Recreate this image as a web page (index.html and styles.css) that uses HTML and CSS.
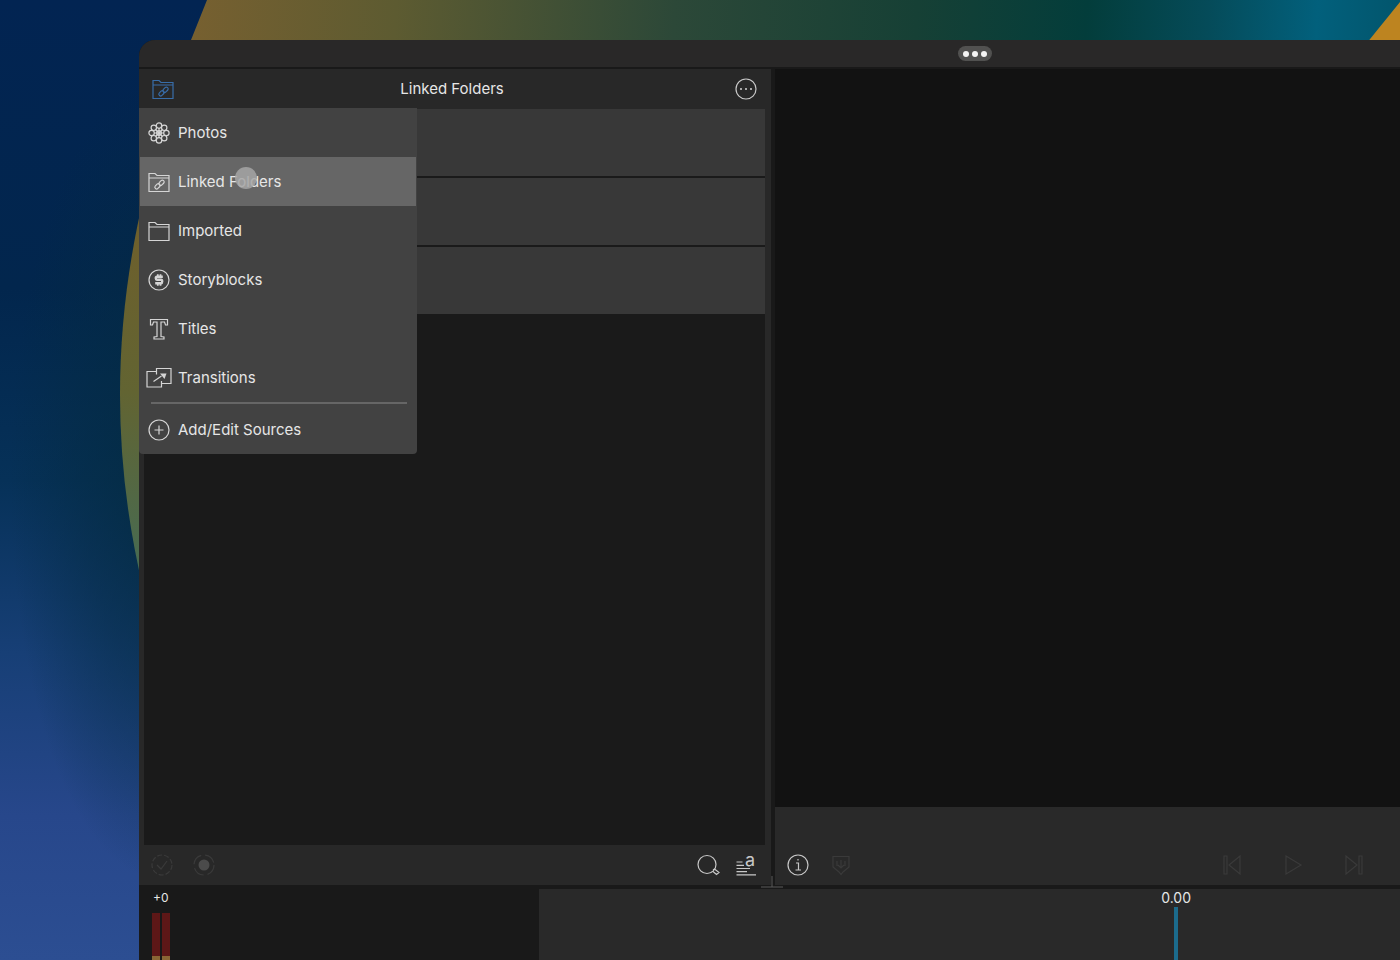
FILE: index.html
```html
<!DOCTYPE html>
<html lang="en">
<head>
<meta charset="utf-8">
<meta name="viewport" content="width=device-width, initial-scale=1">
<title>Linked Folders</title>
<link rel="stylesheet" href="styles.css">
</head>
<body>
<svg class="wallpaper" viewBox="0 0 1400 960" preserveAspectRatio="xMinYMin slice" aria-hidden="true">
  <defs>
    <linearGradient id="sea" x1="0" y1="0" x2="0" y2="960" gradientUnits="userSpaceOnUse">
      <stop offset="0" stop-color="#022452"/><stop offset=".3" stop-color="#02264d"/><stop offset=".5" stop-color="#063158"/><stop offset=".68" stop-color="#173f76"/><stop offset=".85" stop-color="#27478b"/><stop offset="1" stop-color="#2c4e92"/>
    </linearGradient>
    <radialGradient id="shade" cx="0" cy="0" r="1" gradientUnits="userSpaceOnUse" gradientTransform="translate(160 480) scale(150 400)">
      <stop offset="0" stop-color="#042b42" stop-opacity=".9"/><stop offset=".5" stop-color="#042b42" stop-opacity=".5"/><stop offset="1" stop-color="#042b42" stop-opacity="0"/>
    </radialGradient>
    <linearGradient id="arch" x1="190" y1="0" x2="1400" y2="60" gradientUnits="userSpaceOnUse">
      <stop offset="0" stop-color="#776030"/><stop offset=".17" stop-color="#5d5b31"/><stop offset=".4" stop-color="#2c4838"/><stop offset=".6" stop-color="#164035"/><stop offset=".74" stop-color="#033d3b"/><stop offset=".84" stop-color="#054b59"/><stop offset=".93" stop-color="#02607c"/><stop offset="1" stop-color="#02556c"/>
    </linearGradient>
    <linearGradient id="rim" x1="0" y1="210" x2="0" y2="575" gradientUnits="userSpaceOnUse">
      <stop offset="0" stop-color="#6f5f2c"/><stop offset=".5" stop-color="#626432"/><stop offset="1" stop-color="#466b53"/>
    </linearGradient>
  </defs>
  <rect width="1400" height="960" fill="url(#sea)"/>
  <rect width="320" height="960" fill="url(#shade)"/>
  <path d="M207 0H1400V60H183Z" fill="url(#arch)"/>
  <path d="M1400 2L1366 44H1400Z" fill="#bd8420"/>
  <path d="M144 196C112 330 112 460 144 592Z" fill="url(#rim)"/>
</svg>

<svg class="symbols" aria-hidden="true">
  <symbol id="folder" viewBox="0 0 26 26"><path d="M3 22.500V4.500H9L11 6.500H23V22.500ZM3 9H23"/></symbol>
  <symbol id="linked" viewBox="0 0 26 26"><path d="M3 22.500V4.500H9L11 6.500H23V22.500ZM3 9H23"/><rect x="12.500" y="12" width="6" height="3.600" rx="1.800" transform="rotate(-45 15.500 13.800)"/><rect x="8.500" y="15.500" width="6" height="3.600" rx="1.800" transform="rotate(-45 11.500 17.300)"/></symbol>
</svg>

<main class="window">
  <header class="titlebar">
    <button class="grabber" aria-label="Window options"><i></i><i></i><i></i></button>
  </header>

  <div class="workspace">
    <section class="library">
      <header class="library-head">
        <button class="icon-button source" aria-label="Media source"><svg class="icon"><use href="#linked"/></svg></button>
        <h1>Linked Folders</h1>
        <button class="icon-button" aria-label="More"><svg class="icon" viewBox="0 0 26 26"><circle cx="13" cy="13" r="10"/><g class="solid"><circle cx="8" cy="13" r="1.100"/><circle cx="13" cy="13" r="1.100"/><circle cx="18" cy="13" r="1.100"/></g></svg></button>
      </header>

      <div class="folder-list">
        <div class="folder-row"></div>
        <div class="folder-row"></div>
        <div class="folder-row"></div>
      </div>

      <nav class="menu" aria-label="Sources">
        <button class="menu-item"><svg class="icon" viewBox="0 0 26 26"><g><circle cx="13" cy="5.600" r="2.700"/><circle cx="18.200" cy="7.800" r="2.700"/><circle cx="20.400" cy="13" r="2.700"/><circle cx="18.200" cy="18.200" r="2.700"/><circle cx="13" cy="20.400" r="2.700"/><circle cx="7.800" cy="18.200" r="2.700"/><circle cx="5.600" cy="13" r="2.700"/><circle cx="7.800" cy="7.800" r="2.700"/><circle cx="13" cy="13" r="2.400"/><path d="M13 8V18M8 13H18M9.500 9.500L16.500 16.500M16.500 9.500L9.500 16.500"/></g></svg>Photos</button>
        <button class="menu-item selected"><svg class="icon"><use href="#linked"/></svg>Linked Folders<span class="pointer"></span></button>
        <button class="menu-item"><svg class="icon"><use href="#folder"/></svg>Imported</button>
        <button class="menu-item"><svg class="icon" viewBox="0 0 26 26"><circle cx="13" cy="13" r="10"/><g class="bold-line"><path d="M16.800 9.700H11Q9.800 9.700 9.800 11.200T11 12.800H15Q16.200 12.800 16.200 14.400T15 16.200H9.200"/><path d="M11.800 7.200V9M14.500 7.200V9M11.800 17V18.800M14.500 17V18.800" stroke-width="1.800"/></g></svg>Storyblocks</button>
        <button class="menu-item"><svg class="icon" viewBox="0 0 26 26"><path d="M4.500 3.500H21.500V9H19.500L18.500 6H15V20.500L18 21V23H8V21L11 20.500V6H7.500L6.500 9H4.500Z"/></svg>Titles</button>
        <button class="menu-item"><svg class="icon" viewBox="0 0 26 26"><path d="M10.500 6.500H1V22H15.500V18.500M10.500 9.500V3.500H25V18.500H15.500V16M7.500 16.500L15.500 11"/><path class="solid" d="M14 8.500H20.500L18.500 14Z"/></svg>Transitions</button>
        <hr>
        <button class="menu-item"><svg class="icon" viewBox="0 0 26 26"><circle cx="13" cy="13" r="10"/><path d="M13 8.500V17.500M8.500 13H17.500"/></svg>Add/Edit Sources</button>
      </nav>

      <footer class="library-tools">
        <button class="icon-button" disabled aria-label="Select"><svg class="icon" viewBox="0 0 26 26"><circle cx="13" cy="13" r="10" stroke-dasharray="5 2"/><path d="M8 13L12 17L18 9"/></svg></button>
        <button class="icon-button" disabled aria-label="Record"><svg class="icon" viewBox="0 0 26 26"><circle cx="13" cy="13" r="10" stroke-dasharray="12 4"/><circle class="dot" cx="13" cy="13" r="5.500"/></svg></button>
        <span class="spacer"></span>
        <button class="icon-button" aria-label="Search"><svg class="icon" viewBox="0 0 26 26"><circle cx="12" cy="12.500" r="9"/><path d="M18 18L19.500 17L24 20.500L21.500 22.500L18 19.500"/></svg></button>
        <button class="icon-button" aria-label="Sort"><svg class="icon" viewBox="0 0 26 26"><path d="M3.500 10H9.500M3.500 13.300H11M3.500 16.500H17M3.500 19.600H14M3.500 22.800H23"/><text x="12" y="14">a</text></svg></button>
      </footer>
    </section>

    <section class="preview">
      <div class="screen"></div>
      <footer class="preview-tools">
        <button class="icon-button" aria-label="Info"><svg class="icon" viewBox="0 0 26 26"><circle cx="13" cy="13" r="10"/><path d="M13 7V8.500M11 11H13.500V18M10.500 18H16"/></svg></button>
        <button class="icon-button" disabled aria-label="Insert"><svg class="icon" viewBox="0 0 26 26"><path d="M5 4.500H21V15L15 20L13 22.500L11 20L5 15ZM9 9V14M13 8V16M10 13L13 16L16 13M17 9V14"/></svg></button>
        <span class="spacer"></span>
        <div class="transport">
          <button class="icon-button" disabled aria-label="Previous"><svg class="icon" viewBox="0 0 26 26"><path d="M5 4H8V22H5ZM21 4V22L10 13Z"/></svg></button>
          <button class="icon-button" disabled aria-label="Play"><svg class="icon" viewBox="0 0 26 26"><path d="M6 4L21 13L6 22Z"/></svg></button>
          <button class="icon-button" disabled aria-label="Next"><svg class="icon" viewBox="0 0 26 26"><path d="M18 4H21V22H18ZM5 4V22L16 13Z"/></svg></button>
        </div>
      </footer>
    </section>
    <svg class="resize" viewBox="0 0 24 12" aria-hidden="true"><path d="M12 0V11M1 11H23"/></svg>
  </div>

  <section class="timeline">
    <div class="audio">
      <span>+0</span>
      <div class="meters"><i></i><i></i></div>
    </div>
    <div class="tracks">
      <div class="playhead"><span>0.00</span><i></i></div>
    </div>
  </section>
</main>
</body>
</html>
```
FILE: styles.css
```css
* { box-sizing: border-box; }

body {
  margin: 0;
  height: 100vh;
  overflow: hidden;
  padding: 40px 0 0 139px;
  background: #022452;
  color: #e6e6e6;
  font: 15px/20px Inter, "Liberation Sans", sans-serif;
}

button {
  border: 0;
  padding: 0;
  background: none;
  color: inherit;
  font: inherit;
}

.wallpaper {
  position: absolute;
  inset: 0;
  z-index: -1;
  width: 100%;
  height: 100%;
}

.symbols { display: none; }

.window {
  display: flex;
  flex-direction: column;
  height: 100%;
  overflow: hidden;
  border-radius: 16px 0 0 0;
  background: #191919;
}

.titlebar {
  flex: none;
  display: grid;
  grid-template-columns: 836px;
  justify-items: end;
  align-items: center;
  height: 27px;
  margin-bottom: 2px;
  padding-left: 17px;
  background: #292828;
}

.grabber {
  display: flex;
  justify-content: center;
  align-items: center;
  gap: 3px;
  width: 34px;
  height: 15px;
  border-radius: 8px;
  background: #515150;
}

.grabber i {
  width: 6px;
  height: 6px;
  border-radius: 50%;
  background: #f4f4f4;
}

.workspace {
  position: relative;
  flex: 1;
  display: grid;
  grid-template-columns: 632fr 625fr;
  gap: 4px;
  min-height: 0;
  margin-bottom: 4px;
}

.library {
  position: relative;
  display: flex;
  flex-direction: column;
  min-width: 0;
  background: #282828;
}

.library-head {
  display: flex;
  justify-content: space-between;
  align-items: center;
  height: 40px;
  padding: 0 12px 0 11px;
}

h1 {
  margin: 0;
  padding-right: 5px;
  font-size: 15px;
  font-weight: 400;
}

.icon {
  flex: none;
  display: block;
  width: 26px;
  height: 26px;
  overflow: visible;
  fill: none;
  stroke: currentColor;
  stroke-width: 1.2;
}

.solid { fill: currentColor; stroke: none; }
.bold-line { stroke-width: 2.4; }
.dot { fill: #4b4b4b; stroke: none; }

.icon text {
  fill: currentColor;
  stroke: none;
  font: 18px Inter, sans-serif;
}

.icon-button { color: #c8c8c8; }
.icon-button:disabled { color: #3a3a3a; }
.icon-button.source { color: #386da9; }

.folder-list {
  flex: 1;
  display: flex;
  flex-direction: column;
  gap: 2px;
  margin: 0 6px 0 5px;
  background: #1a1a1a;
}

.folder-row {
  height: 67px;
  background: #383838;
}

.menu {
  position: absolute;
  top: 39px;
  left: 0;
  width: 278px;
  padding-left: 1px;
  border-radius: 0 0 4px 4px;
  background: #424242;
}

.menu-item {
  position: relative;
  display: flex;
  align-items: center;
  gap: 6px;
  width: 276px;
  height: 49px;
  padding-left: 6px;
}

.menu-item .icon { color: #d5d5d5; }
.menu-item.selected { background: #666; }

.pointer {
  position: absolute;
  left: 95px;
  top: 10px;
  width: 22px;
  height: 22px;
  border-radius: 50%;
  background: rgb(166 166 166 / 85%);
}

.menu hr {
  height: 2px;
  margin: 0 10px 1px 11px;
  border: 0;
  background: #666;
}

.library-tools {
  display: flex;
  align-items: center;
  gap: 16px;
  height: 40px;
  padding: 0 12px 0 10px;
}

.library-tools .spacer + .icon-button { margin-right: -4px; }

.spacer { flex: 1; }

.preview {
  display: flex;
  flex-direction: column;
  min-width: 0;
  background: #292929;
}

.screen {
  flex: 1;
  background: #121212;
}

.preview-tools {
  display: flex;
  align-items: flex-end;
  gap: 17px;
  height: 78px;
  padding: 0 33px 7px 10px;
}

.transport {
  display: flex;
  gap: 35px;
}

.resize {
  position: absolute;
  left: 621px;
  bottom: -3px;
  width: 24px;
  height: 12px;
  stroke: #5b5b5b;
}

.timeline {
  flex: none;
  display: grid;
  grid-template-columns: 400px 1fr;
  height: 71px;
  font-size: 14px;
  line-height: 18px;
}

.audio {
  display: flex;
  flex-direction: column;
  gap: 6px;
  padding-left: 13px;
  font-size: 12px;
}

.audio span { padding-left: 1px; }

.meters {
  flex: 1;
  display: flex;
  gap: 2px;
}

.meters i {
  width: 8px;
  background: linear-gradient(#5d1717 43px, #8a6535 43px);
}

.tracks {
  display: grid;
  grid-template-columns: 74fr 26fr;
  background: #292929;
}

.playhead {
  display: flex;
  flex-direction: column;
  align-items: center;
  justify-self: end;
  width: 34px;
  margin-right: -17px;
}

.playhead i {
  flex: 1;
  width: 4px;
  background: #1c6b8c;
}
```
